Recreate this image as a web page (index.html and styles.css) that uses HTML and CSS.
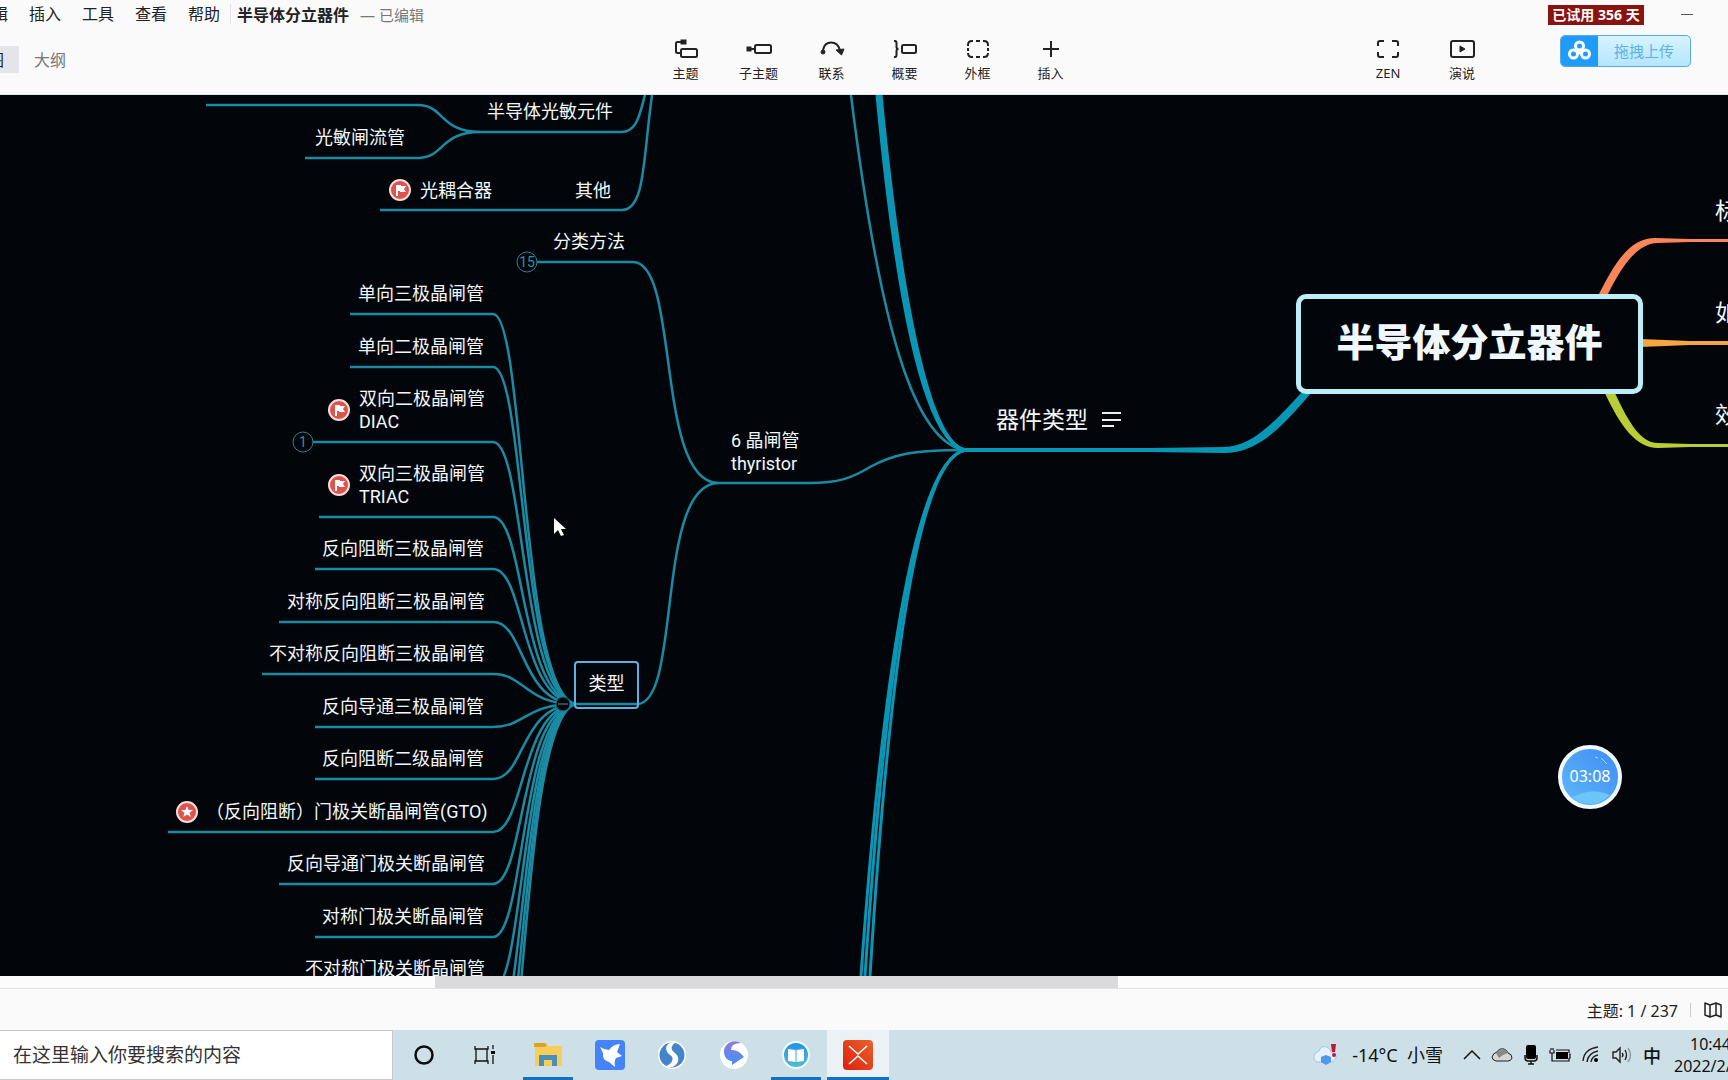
FILE: index.html
```html
<!DOCTYPE html>
<html lang="zh-CN">
<head>
<meta charset="utf-8">
<title>半导体分立器件</title>
<link rel="stylesheet" href="styles.css">
</head>
<body>
<header class="app-header">
  <div class="title-row">
    <nav class="menu">
      <button type="button">编辑</button>
      <button type="button">插入</button>
      <button type="button">工具</button>
      <button type="button">查看</button>
      <button type="button">帮助</button>
    </nav>
    <h1 class="doc-title">半导体分立器件</h1>
    <span class="doc-state">— 已编辑</span>
    <span class="trial">已试用 356 天</span>
    <button type="button" class="minimize" aria-label="最小化"></button>
  </div>
  <div class="tool-row">
    <div class="views">
      <button type="button" class="view view-active">思维导图</button>
      <button type="button" class="view">大纲</button>
    </div>
    <div class="tools">
      <button type="button" class="tool">
        <svg width="26" height="20" viewBox="0 0 26 20"><path d="M8 3H4.500Q3 3 3 4.500V12.500Q3 14 4.500 14H8"/><rect x="8" y="10" width="16" height="8" rx="1.500"/><rect class="solid" x="8" y="1" width="5" height="4"/></svg>
        <span>主题</span></button>
      <button type="button" class="tool">
        <svg width="26" height="20" viewBox="0 0 26 20"><path d="M4 10H9"/><rect x="9" y="6" width="16" height="8" rx="1.500"/><rect class="solid" x="1" y="8" width="4" height="4"/></svg>
        <span>子主题</span></button>
      <button type="button" class="tool">
        <svg width="26" height="20" viewBox="0 0 26 20"><path d="M4 11C6 1 18 1 21 11"/><circle class="solid" cx="4" cy="13" r="2"/><path class="solid" d="M17 11L25 10L22.500 16Z"/></svg>
        <span>联系</span></button>
      <button type="button" class="tool">
        <svg width="26" height="20" viewBox="0 0 26 20"><path d="M2 2H3Q4.500 2 4.500 4V8Q4.500 10 6.500 10Q4.500 10 4.500 12V16Q4.500 18 3 18H2"/><rect x="10" y="6" width="14" height="8" rx="1.500"/></svg>
        <span>概要</span></button>
      <button type="button" class="tool">
        <svg width="26" height="20" viewBox="0 0 26 20"><path d="M8 2H7Q3 2 3 6V7M3 9V12M3 14Q3 18 7 18H8M18 2H19Q23 2 23 6V7M23 9V12M23 14Q23 18 19 18H18M11 2H15M11 18H15"/></svg>
        <span>外框</span></button>
      <button type="button" class="tool">
        <svg width="26" height="20" viewBox="0 0 26 20"><path d="M13 2V18M5 10H21"/></svg>
        <span>插入</span></button>
    </div>
    <div class="tools tools-end">
      <button type="button" class="tool">
        <svg width="26" height="20" viewBox="0 0 26 20"><path d="M9 2H5Q3 2 3 4V7M17 2H21Q23 2 23 4V7M3 13V16Q3 18 5 18H9M23 13V16Q23 18 21 18H17"/></svg>
        <span>ZEN</span></button>
      <button type="button" class="tool">
        <svg width="26" height="20" viewBox="0 0 26 20"><rect x="2" y="2" width="23" height="16" rx="2"/><path class="solid" d="M11 7L16 10L11 13Z"/></svg>
        <span>演说</span></button>
    </div>
    <button type="button" class="upload">
      <svg width="37" height="30" viewBox="0 0 37 30"><rect width="37" height="30" fill="#1f9bfb"/><g fill="none" stroke="#fff" stroke-width="3"><circle cx="18.500" cy="10" r="4"/><circle cx="12.500" cy="18" r="4"/><circle cx="24.500" cy="18" r="4"/></g><path d="M17 15L18.500 17L20 15" fill="none" stroke="#fff" stroke-width="2"/></svg>
      <span>拖拽上传</span>
    </button>
  </div>
</header>

<main class="canvas">
  <svg class="edges" width="1728" height="881" viewBox="0 95 1728 881" aria-hidden="true">
    <g class="thin">
      <path d="M206 105H418C444 105 440 132 480 132H621C638 132 640 112 645 95"/>
      <path d="M305 158H418C444 158 440 132 480 132"/>
      <path d="M380 210H622C645 210 643 160 652 95"/>
      <path d="M537 262H633C680 262 655 481 718 483H810C838 483 852 478 870 467C892 455 910 450 966 450"/>
      <path d="M572 704H637C682 704 655 485 718 483"/>
      <path d="M966 450C915 445 880 330 851 95"/>
      <path d="M350 314H493C525 314 520 690 575 704"/>
      <path d="M350 367H493C525 367 520 692 575 704"/>
      <path d="M313 442H493C525 442 520 694 575 704"/>
      <path d="M319 517H493C525 517 520 696 575 704"/>
      <path d="M315 569H493C525 569 520 698 575 704"/>
      <path d="M279 622H493C525 622 520 702 575 704"/>
      <path d="M262 674H493C525 674 525 704 575 704"/>
      <path d="M315 727H493C525 727 525 704 575 704"/>
      <path d="M315 779H493C525 779 520 706 575 704"/>
      <path d="M168 832H493C525 832 520 708 575 704"/>
      <path d="M279 884H493C525 884 520 710 575 704"/>
      <path d="M315 937H493C525 937 520 714 575 704"/>
      <path d="M300 989H493C525 989 520 716 575 704"/>
      <path d="M300 1042H493C525 1042 520 718 575 704"/>
      <path d="M300 1094H493C525 1094 520 720 575 704"/>
      <path d="M300 1147H493C525 1147 520 722 575 704"/>
    </g>
    <g class="bundle">
      <path d="M966 450C929 445 899 330 877 95"/>
      <path d="M966 450C931 445 901 330 879 95"/>
      <path d="M966 450C933 445 904 330 881 95"/>
      <path d="M966 450C925 455 888 600 861 976"/>
      <path d="M966 450C925 455 890 600 865 976"/>
      <path d="M966 450C927 455 893 600 870 976"/>
    </g>
    <path fill="#0797b5" d="M1301 393C1272 425 1250 447 1224 447L1150 448H962V452H1150L1224 453C1256 453 1280 430 1311 393Z"/>
    <path fill="#fa8558" d="M1598 296C1615 262 1630 238 1655 238L1690 239H1728V242H1690L1658 243C1638 243 1622 265 1607 296Z"/>
    <path fill="#f7a540" d="M1640 339L1690 341H1728V345H1690L1640 347Z"/>
    <path fill="#b9cd35" d="M1604 391C1620 426 1636 448 1658 448L1690 447H1728V444H1690L1658 443C1642 443 1630 426 1614 391Z"/>
    <g class="count">
      <circle cx="527" cy="262" r="10"/>
      <circle cx="303" cy="442" r="10"/>
    </g>
    <circle cx="563" cy="704" r="7" fill="#02060a" stroke="#116b7f"/>
    <path d="M558 704H568" stroke="#5b8f97"/>
    <g id="flags">
      <g transform="translate(225 84)"><circle class="mark" r="10"/></g>
      <g transform="translate(400 190)"><circle class="mark" r="10"/><path class="glyph" d="M-4 -5H1V-4H6L4 -1L6 2H0V1H-2V6H-4Z"/></g>
      <g transform="translate(339 410)"><circle class="mark" r="10"/><path class="glyph" d="M-4 -5H1V-4H6L4 -1L6 2H0V1H-2V6H-4Z"/></g>
      <g transform="translate(339 485)"><circle class="mark" r="10"/><path class="glyph" d="M-4 -5H1V-4H6L4 -1L6 2H0V1H-2V6H-4Z"/></g>
      <g transform="translate(187 812)"><circle class="mark" r="10"/><path class="glyph" d="M0 -6L1.600 -2H6L2.500 .800L3.800 5L0 2.500L-3.800 5L-2.500 .800L-6 -2H-1.600Z"/></g>
    </g>
    <path d="M1102 413H1121M1102 420H1121M1102 426H1114" stroke="#e8f0f4" stroke-width="2"/>
    <path d="M554 518V534L558 530L561 536L564 535L561 529H566Z" fill="#fff"/>
  </svg>

  <div class="topic t-photo">半导体光敏元件</div>
  <div class="topic t-photothyristor">光敏闸流管</div>
  <div class="topic t-coupler">光耦合器</div>
  <div class="topic t-other">其他</div>
  <div class="topic t-method">分类方法</div>
  <span class="badge b-method">15</span>
  <div class="topic t-l1">单向三极晶闸管</div>
  <div class="topic t-l2">单向二极晶闸管</div>
  <div class="topic t-l3">双向二极晶闸管<br>DIAC</div>
  <span class="badge b-diac">1</span>
  <div class="topic t-l4">双向三极晶闸管<br>TRIAC</div>
  <div class="topic t-l5">反向阻断三极晶闸管</div>
  <div class="topic t-l6">对称反向阻断三极晶闸管</div>
  <div class="topic t-l7">不对称反向阻断三极晶闸管</div>
  <div class="topic t-l8">反向导通三极晶闸管</div>
  <div class="topic t-l9">反向阻断二级晶闸管</div>
  <div class="topic t-l10">（反向阻断）门极关断晶闸管(GTO)</div>
  <div class="topic t-l11">反向导通门极关断晶闸管</div>
  <div class="topic t-l12">对称门极关断晶闸管</div>
  <div class="topic t-l13">不对称门极关断晶闸管</div>
  <div class="topic t-types">类型</div>
  <div class="topic t-thyristor">6 晶闸管<br>thyristor</div>
  <div class="topic major t-devices">器件类型</div>
  <div class="root-topic">半导体分立器件</div>
  <div class="topic major t-r1">标</div>
  <div class="topic major t-r2">如</div>
  <div class="topic major t-r3">效</div>
  <div class="timer">03:08
    <svg width="56" height="56" viewBox="0 0 56 56"><path d="M10 48Q30 38 48 46Q39 55 28 55Q17 55 10 48Z" fill="#6cc6fa"/><path d="M33 8L36 9M39 9L45 15" stroke="#a9d6ff"/></svg>
  </div>
</main>

<div class="scrollbar"><div class="thumb"></div></div>
<footer class="status">
  <span>主题: 1 / 237</span>
  <span class="divider"></span>
  <svg width="20" height="20" viewBox="0 0 20 20"><path d="M2 3L7 5V17L2 15ZM7 5L13 3V15L7 17M13 3L18 5V17L13 15" fill="none" stroke="#222" stroke-width="1.500" stroke-linejoin="round"/></svg>
</footer>

<div class="taskbar">
  <input class="search" type="text" aria-label="搜索" placeholder="在这里输入你要搜索的内容">
  <div class="apps">
    <button type="button" class="app" aria-label="Cortana"><svg width="30" height="30" viewBox="0 0 30 30"><circle cx="15" cy="15" r="8.500" fill="none" stroke="#0a0d10" stroke-width="2.500"/></svg></button>
    <button type="button" class="app" aria-label="任务视图"><svg width="30" height="30" viewBox="0 0 30 30"><path d="M4 6V9H17V6M4 24V21H17V24M5 9V21M16 9V21M22 5V9M22 15V24" fill="none" stroke="#111" stroke-width="1.300"/><path d="M20 11H24V14H20Z"/></svg></button>
    <button type="button" class="app running" aria-label="文件资源管理器"><svg width="30" height="30" viewBox="0 0 30 30"><path d="M2 3H13L15 6H29V26H2Z" fill="#f7cf58"/><path d="M1 3H12L14 5L12 7H1Z" fill="#d9a32a"/><path d="M6 26V15H24V26H19V20H11V26Z" fill="#4a8fba"/></svg></button>
    <button type="button" class="app" aria-label="迅雷"><svg width="30" height="30" viewBox="0 0 30 30"><rect width="30" height="30" rx="4" fill="#4583fa"/><path d="M5 7Q10 10 14 10Q18 4 25 4L22 12L27 16L21 18Q19 21 20 27L14 22Q7 20 8 13Z" fill="#fff"/></svg></button>
    <button type="button" class="app" aria-label="搜狗"><svg width="30" height="30" viewBox="0 0 30 30"><circle cx="15" cy="15" r="14" fill="#fff"/><circle cx="15" cy="15" r="12.500" fill="#4484c9"/><path d="M20 2C7 1 7 11 13 15C18 18 15 24 9 26C18 31 26 19 18 13C12 9 15 4 20 2Z" fill="#fff"/></svg></button>
    <button type="button" class="app" aria-label="浏览器"><svg width="30" height="30" viewBox="0 0 30 30"><defs><linearGradient id="swirl" x1="0" y1="0" x2="0" y2="1"><stop offset="0" stop-color="#8e7bdd"/><stop offset="1" stop-color="#3f92f4"/></linearGradient></defs><circle cx="15" cy="15" r="14" fill="#fff"/><path d="M22 3C14 -2 4 4 5 13C6 19 10 21 13 21V25L25 17Q19 9 12 10Q12 3 22 3Z" fill="url(#swirl)"/></svg></button>
    <button type="button" class="app running" aria-label="阅读"><svg width="30" height="30" viewBox="0 0 30 30"><defs><linearGradient id="read" x1="0" y1="0" x2="0" y2="1"><stop offset="0" stop-color="#2390e4"/><stop offset="1" stop-color="#4fc0ce"/></linearGradient></defs><circle cx="15" cy="15" r="13" fill="url(#read)" stroke="#effbff" stroke-width="2"/><path d="M7 9L14.500 10V22L7 21ZM15.500 10L23 9V21L15.500 22Z" fill="#fff"/></svg></button>
    <button type="button" class="app running focused" aria-label="XMind"><svg width="30" height="30" viewBox="0 0 30 30"><defs><linearGradient id="xm" x1="1" y1="0" x2="0" y2="1"><stop offset="0" stop-color="#e8642c"/><stop offset="1" stop-color="#e01e0c"/></linearGradient></defs><rect width="30" height="30" rx="4" fill="url(#xm)"/><path d="M6 6L15 14L24 6M6 24L15 16L24 24" fill="none" stroke="#fff" stroke-width="1.600"/></svg></button>
  </div>
  <div class="tray">
    <svg width="28" height="26" viewBox="0 0 28 26"><path d="M6 20Q1 19 2 14Q3 10 7 9Q9 3 15 5Q19 7 19 10Q25 11 24 16Q23 20 18 20Z" fill="#e6f1fb" stroke="#9cc8f0"/><path d="M9 15L14 13L19 15V20L14 23L9 20Z" fill="#4e9ae8"/><path d="M19 2H24L23 10H20Z" fill="#c3163b"/><circle cx="22" cy="13" r="2" fill="#c3163b"/></svg>
    <span class="weather">-14°C&nbsp; 小雪</span>
    <svg class="gap-chevron" width="18" height="20" viewBox="0 0 18 20"><path d="M1 14L9 6L17 14" fill="none" stroke="#111" stroke-width="1.500"/></svg>
    <svg width="22" height="20" viewBox="0 0 22 20"><path d="M5 16Q1 15 1 12Q2 8 6 7Q8 3 13 4Q16 5 17 8Q21 9 21 13Q20 16 17 16Z" fill="#d6d6d9" stroke="#222"/><path d="M5 8Q9 4 13 4Q16 6 17 8L12 10L8 13Z" fill="#888"/></svg>
    <svg width="16" height="22" viewBox="0 0 16 22"><rect x="3" y="1" width="10" height="14" rx="2"/><path d="M2 11V14Q2 17 5 17H11Q14 17 14 14V11M8 17V20M5 20H11" fill="none" stroke="#111" stroke-width="1.500"/></svg>
    <svg width="22" height="20" viewBox="0 0 22 20"><rect x="7" y="7" width="12" height="7"/><path d="M7 5H20V8M20 13V16H5M20 9H21V13H20M1 5V8H5V5M3 8V16H6M2 3V5M4 3V5" fill="none" stroke="#111" stroke-width="1.200"/></svg>
    <svg width="20" height="20" viewBox="0 0 20 20"><g fill="none" stroke="#222" stroke-width="1.400"><path d="M2 16Q3 4 17 2M6 17Q7 8 17 6M10 17Q11 11 17 10"/></g><circle cx="15" cy="15" r="2"/></svg>
    <svg width="22" height="20" viewBox="0 0 22 20"><g fill="none" stroke="#222" stroke-width="1.400"><path d="M2 7H5L9 3V17L5 13H2ZM11 8Q13 10 11 12M14 5Q17 10 14 15"/><path d="M17 3Q22 10 17 17" stroke="#8b9a9f"/></g></svg>
    <span class="ime">中</span>
    <div class="clock"><span class="time">10:44</span><span>2022/2/</span></div>
  </div>
</div>
</body>
</html>
```
FILE: styles.css
```css
* { box-sizing: border-box; }

body {
  margin: 0;
  height: 100vh;
  display: flex;
  flex-direction: column;
  overflow: hidden;
  background: #fafafb;
  color: #222;
  font-family: "Noto Sans", "Noto Sans CJK SC", sans-serif;
  font-size: 16px;
}

button {
  padding: 0;
  border: 0;
  background: none;
  color: inherit;
  font: inherit;
}

svg { display: block; flex: none; }

/* Header */
.app-header {
  flex: none;
  height: 95px;
  overflow: hidden;
  border-bottom: 1px solid #e2e6e8;
  background: #fafafb;
}

.title-row {
  display: flex;
  align-items: center;
  height: 28px;
  white-space: nowrap;
}

.menu {
  display: flex;
  gap: 21px;
  margin-left: -24px;
  padding-right: 10px;
  border-right: 1px solid #e4e4e6;
  line-height: 20px;
}

.doc-title {
  margin: 0 11px 0 6px;
  font-size: 16px;
  font-weight: 700;
}

.doc-state { color: #777; font-size: 15px; }

.trial {
  margin-left: auto;
  margin-top: 2px;
  width: 96px;
  background: #8b130f;
  color: #fff;
  font-size: 14px;
  font-weight: 700;
  line-height: 20px;
  text-align: center;
}

.minimize {
  width: 12px;
  height: 1px;
  margin: 0 35px 0 37px;
  background: #555;
}

.tool-row { display: flex; align-items: flex-start; height: 66px; }

.views { display: flex; width: 649px; padding-top: 18px; }

.view { height: 27px; padding: 0 15px; color: #777; line-height: 24px; }

.view-active { margin-left: -75px; background: #e4e5e8; color: #222; }

.tools { display: flex; padding-top: 11px; }

.tools-end { margin-left: auto; padding-right: 61px; }

.tool {
  display: flex;
  flex-direction: column;
  align-items: center;
  gap: 4px;
  width: 74px;
  font-size: 13px;
  line-height: 20px;
}

.tools:not(.tools-end) .tool { width: 73px; }

.tool svg { fill: none; stroke: #222; stroke-width: 2; }
.tool .solid { fill: #222; stroke-width: 1; }

.upload {
  display: flex;
  align-items: center;
  width: 131px;
  height: 32px;
  margin: 7px 37px 0 0;
  overflow: hidden;
  border: 1px solid #58a9e0;
  border-radius: 5px;
  background: linear-gradient(#d6f3fe, #b4e6fd);
  color: #5fb2e6;
  font-size: 15px;
  line-height: 28px;
}

.upload span { flex: 1; text-align: center; }

/* Mind map */
.canvas {
  position: relative;
  flex: 1;
  min-height: 0;
  overflow: hidden;
  background: #02060a;
}

.edges { position: absolute; left: 0; top: 0; }
.thin { fill: none; stroke: #1b8ba3; stroke-width: 2.5; }
.bundle { fill: none; stroke: #0a96b4; stroke-width: 3; }
.count { fill: #02060a; stroke: #2b8295; }
.mark { fill: #dc5350; stroke: #f7dedb; stroke-width: 2; }
.glyph { fill: #fff; }

.topic {
  position: absolute;
  color: #f3f7fa;
  font-family: Roboto, "Noto Sans CJK SC", sans-serif;
  font-size: 18px;
  line-height: 23px;
  white-space: nowrap;
}

.major { font-size: 23px; line-height: 30px; }

.t-photo { left: 487px; top: 5px; }
.t-photothyristor { left: 315px; top: 31px; }
.t-coupler { left: 420px; top: 84px; }
.t-other { left: 575px; top: 84px; }
.t-method { left: 553px; top: 135px; }
.t-l1 { left: 358px; top: 187px; }
.t-l2 { left: 358px; top: 240px; }
.t-l3 { left: 359px; top: 292px; }
.t-l4 { left: 359px; top: 367px; }
.t-l5 { left: 322px; top: 442px; }
.t-l6 { left: 287px; top: 495px; }
.t-l7 { left: 269px; top: 547px; }
.t-l8 { left: 322px; top: 600px; }
.t-l9 { left: 322px; top: 652px; }
.t-l10 { left: 206px; top: 705px; }
.t-l11 { left: 287px; top: 757px; }
.t-l12 { left: 322px; top: 810px; }
.t-l13 { left: 305px; top: 862px; }
.t-thyristor { left: 731px; top: 334px; }
.t-devices { left: 996px; top: 311px; }
.t-r1 { left: 1715px; top: 102px; }
.t-r2 { left: 1715px; top: 204px; }
.t-r3 { left: 1715px; top: 306px; }

.t-types {
  left: 574px;
  top: 566px;
  width: 65px;
  height: 48px;
  border: 2px solid #5db1e4;
  border-radius: 4px;
  line-height: 42px;
  text-align: center;
}

.badge {
  position: absolute;
  width: 20px;
  color: #3590a3;
  font-family: Roboto, sans-serif;
  font-size: 14px;
  line-height: 20px;
  text-align: center;
}

.b-method { left: 517px; top: 157px; }
.b-diac { left: 293px; top: 337px; }

.root-topic {
  position: absolute;
  left: 1296px;
  top: 199px;
  width: 347px;
  height: 100px;
  border: 5px solid #bdeef8;
  border-radius: 10px;
  background: #02060a;
  color: #f1f8fd;
  font-family: "Noto Sans CJK SC", sans-serif;
  font-size: 38px;
  font-weight: 900;
  line-height: 82px;
  text-align: center;
}

.timer {
  position: absolute;
  left: 1558px;
  top: 650px;
  width: 64px;
  height: 64px;
  border: 4px solid #f0f8fd;
  border-radius: 50%;
  background: linear-gradient(45deg, #60b7fa, #3d8df2);
  color: #fff;
  font-size: 16px;
  line-height: 54px;
  text-align: center;
  isolation: isolate;
}

.timer svg { position: absolute; left: 0; top: 0; z-index: -1; }

/* Horizontal scroll bar and status line */
.scrollbar { flex: none; height: 13px; border-bottom: 1px solid #e2e2e4; background: #fcfcfc; }
.thumb { width: 39.5%; height: 12px; margin-left: 25.2%; background: #dad9db; }

.status {
  display: flex;
  flex: none;
  align-items: center;
  justify-content: flex-end;
  gap: 12px;
  height: 41px;
  padding: 0 5px 0 0;
  font-size: 16px;
}

.divider { width: 1px; height: 14px; background: #ccc; }

/* Taskbar */
.taskbar { display: flex; flex: none; height: 50px; background: #cddfe7; color: #111; }

.search {
  width: 393px;
  padding: 0 13px;
  border: 1px solid #c5c9cc;
  border-left: 0;
  border-radius: 0;
  background: #fff;
  font: inherit;
  font-size: 19px;
}

.search::placeholder { color: #333; opacity: 1; }

.apps { display: flex; }

.app {
  display: flex;
  align-items: center;
  justify-content: center;
  width: 62px;
  border-top: 3px solid transparent;
  border-bottom: 3px solid transparent;
}

.running {
  width: 50px;
  margin: 0 6px;
  border-bottom-color: #0f72c3;
}

.focused { width: 62px; margin: 0; background: #ebf2f6; border-top-color: #ebf2f6; }

.tray {
  display: flex;
  align-items: center;
  gap: 10px;
  margin-left: auto;
  white-space: nowrap;
}

.weather { margin-left: 2px; font-size: 18px; line-height: 24px; }
.tray > svg:first-child { margin-right: 0; }
.gap-chevron { margin-left: 10px; }
.ime { font-size: 18px; font-weight: 500; }

.clock {
  display: flex;
  flex-direction: column;
  width: 54px;
  margin-left: 3px;
  overflow: hidden;
  font-size: 16px;
  line-height: 22px;
}

.time { padding-left: 16px; }
```
